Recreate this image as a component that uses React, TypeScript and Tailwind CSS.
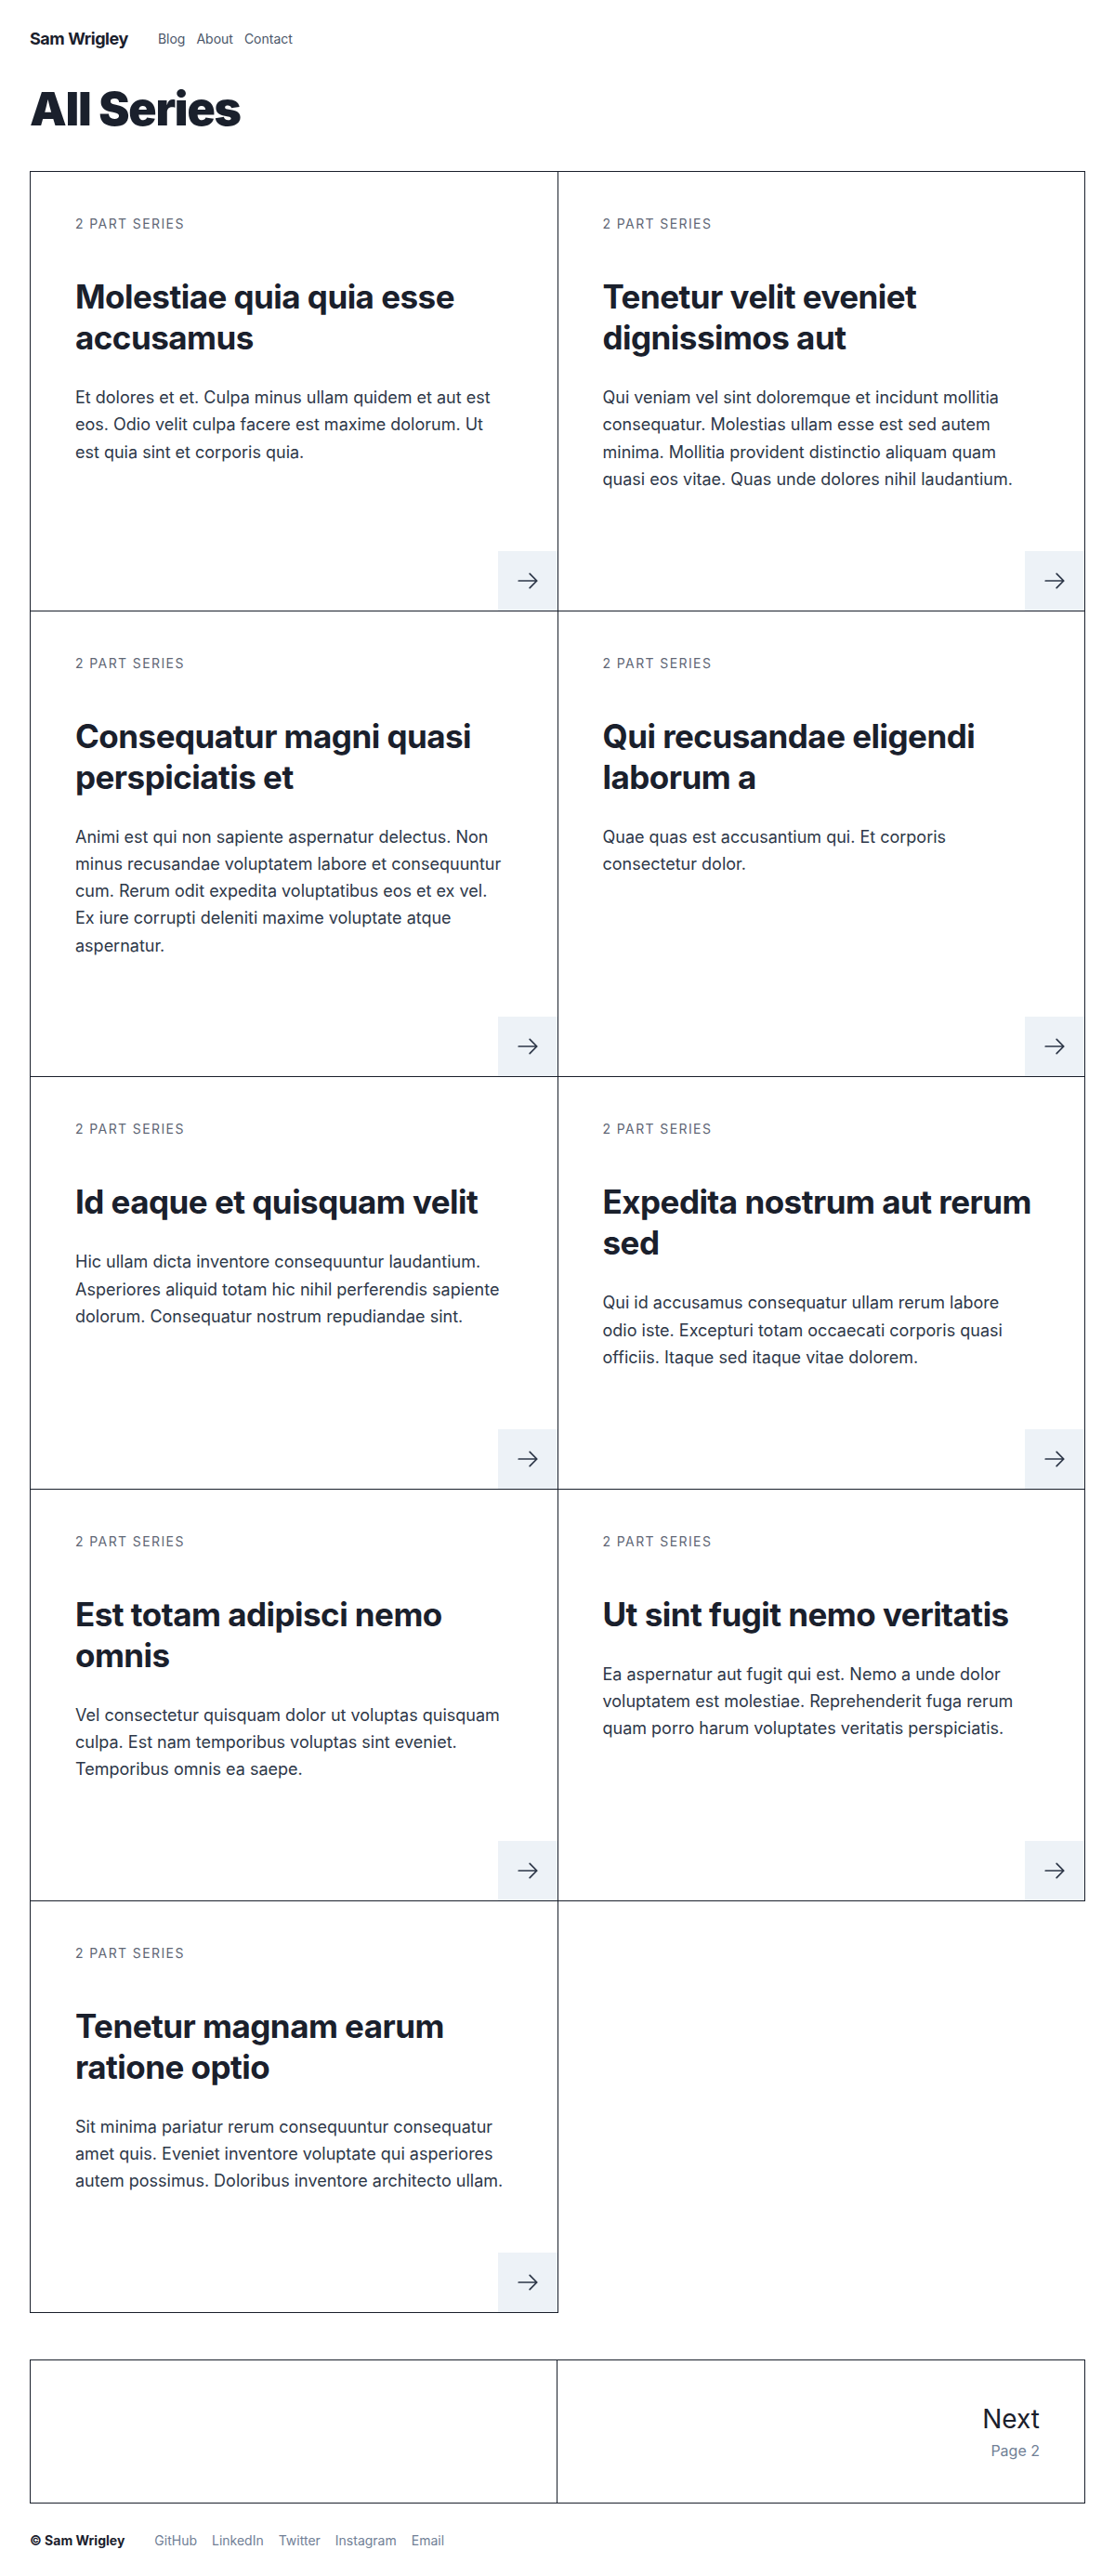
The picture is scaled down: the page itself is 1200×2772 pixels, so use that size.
import React from "react";

interface Series {
  title: string;
  description: string;
}

const series: Series[] = [
  {
    title: "Molestiae quia quia esse accusamus",
    description:
      "Et dolores et et. Culpa minus ullam quidem et aut est eos. Odio velit culpa facere est maxime dolorum. Ut est quia sint et corporis quia.",
  },
  {
    title: "Tenetur velit eveniet dignissimos aut",
    description:
      "Qui veniam vel sint doloremque et incidunt mollitia consequatur. Molestias ullam esse est sed autem minima. Mollitia provident distinctio aliquam quam quasi eos vitae. Quas unde dolores nihil laudantium.",
  },
  {
    title: "Consequatur magni quasi perspiciatis et",
    description:
      "Animi est qui non sapiente aspernatur delectus. Non minus recusandae voluptatem labore et consequuntur cum. Rerum odit expedita voluptatibus eos et ex vel. Ex iure corrupti deleniti maxime voluptate atque aspernatur.",
  },
  {
    title: "Qui recusandae eligendi laborum a",
    description: "Quae quas est accusantium qui. Et corporis consectetur dolor.",
  },
  {
    title: "Id eaque et quisquam velit",
    description:
      "Hic ullam dicta inventore consequuntur laudantium. Asperiores aliquid totam hic nihil perferendis sapiente dolorum. Consequatur nostrum repudiandae sint.",
  },
  {
    title: "Expedita nostrum aut rerum sed",
    description:
      "Qui id accusamus consequatur ullam rerum labore odio iste. Excepturi totam occaecati corporis quasi officiis. Itaque sed itaque vitae dolorem.",
  },
  {
    title: "Est totam adipisci nemo omnis",
    description:
      "Vel consectetur quisquam dolor ut voluptas quisquam culpa. Est nam temporibus voluptas sint eveniet. Temporibus omnis ea saepe.",
  },
  {
    title: "Ut sint fugit nemo veritatis",
    description:
      "Ea aspernatur aut fugit qui est. Nemo a unde dolor voluptatem est molestiae. Reprehenderit fuga rerum quam porro harum voluptates veritatis perspiciatis.",
  },
  {
    title: "Tenetur magnam earum ratione optio",
    description:
      "Sit minima pariatur rerum consequuntur consequatur amet quis. Eveniet inventore voluptate qui asperiores autem possimus. Doloribus inventore architecto ullam.",
  },
];

const ArrowRight = () => (
  <svg
    width="26"
    height="26"
    viewBox="0 0 24 24"
    fill="none"
    stroke="currentColor"
    strokeWidth="1.6"
    strokeLinecap="round"
    strokeLinejoin="round"
  >
    <path d="M14 5l7 7m0 0l-7 7m7-7H3" />
  </svg>
);

const SeriesCard = ({ title, description }: Series) => (
  <div className="flex flex-col border-r border-b border-[#1a202c]">
    <div className="flex-1 px-12 pt-[46px] pb-[62.5px]">
      <p className="text-sm leading-5 uppercase tracking-widest text-[#5f6776]">
        2 Part Series
      </p>
      <h2 className="mt-[46px] text-[35px] leading-[44px] font-bold tracking-[-0.015em] text-[#1a202c]">
        {title}
      </h2>
      <p className="mt-7 max-w-[464px] text-lg leading-relaxed text-[#2d3748]">
        {description}
      </p>
    </div>
    <a
      href="#"
      className="self-end w-16 h-16 flex items-center justify-center bg-[#edf2f7] text-[#2d3748]"
    >
      <ArrowRight />
    </a>
  </div>
);

export default function App() {
  return (
    <div className="min-h-screen bg-white font-['Inter','Noto_Sans',sans-serif] text-[#1a202c]">
      <header className="px-8 pt-7 flex items-center gap-8">
        <a href="#" className="text-lg leading-7 font-bold tracking-tight">
          Sam Wrigley
        </a>
        <nav className="flex gap-3 text-sm text-[#4a5568]">
          <a href="#">Blog</a>
          <a href="#">About</a>
          <a href="#">Contact</a>
        </nav>
      </header>

      <main className="px-8">
        <h1 className="mt-9 text-[50px] leading-none font-black tracking-tight">
          All Series
        </h1>

        <div className="mt-[42px] grid grid-cols-2 border-t border-l border-[#1a202c]">
          {series.map((s) => (
            <SeriesCard key={s.title} {...s} />
          ))}
        </div>

        <div className="mt-[50px] grid grid-cols-2 border border-[#1a202c]">
          <div className="border-r border-[#1a202c]" />
          <a
            href="#"
            className="h-[153px] flex flex-col items-end justify-center pr-12"
          >
            <span className="text-[28px] leading-9">Next</span>
            <span className="mt-1 text-base leading-6 text-[#718096]">Page 2</span>
          </a>
        </div>
      </main>

      <footer className="px-8 pt-[30px] pb-[29px] flex items-center gap-8 text-sm leading-5">
        <span className="font-bold">© Sam Wrigley</span>
        <div className="flex gap-4 text-[#718096]">
          <a href="#">GitHub</a>
          <a href="#">LinkedIn</a>
          <a href="#">Twitter</a>
          <a href="#">Instagram</a>
          <a href="#">Email</a>
        </div>
      </footer>
    </div>
  );
}
